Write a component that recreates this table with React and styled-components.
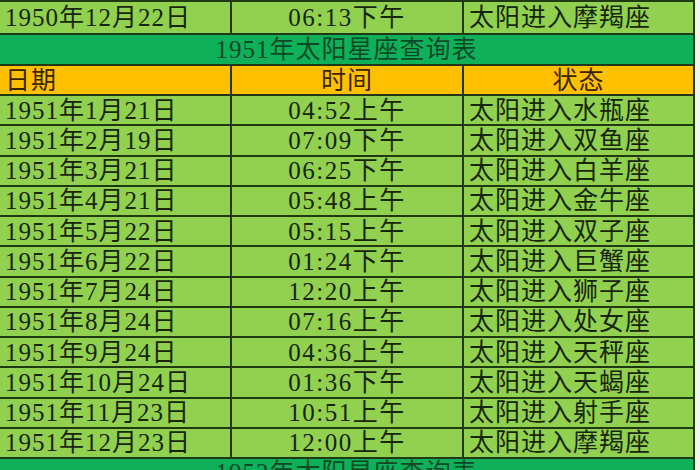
import React from 'react';
import styled, { createGlobalStyle } from 'styled-components';

const GlobalStyle = createGlobalStyle`
  html, body {
    margin: 0;
    padding: 0;
    background: #f3f6ef;
    overflow: hidden;
  }
`;

const Sheet = styled.div`
  width: 695px;
  height: 470px;
  overflow: hidden;
  border-top: 2px solid #1f3a12;
  border-right: 2px solid #1f3a12;
  box-sizing: border-box;
  font-family: "Liberation Serif", "Noto Sans CJK SC", serif;
  font-size: 25px;
  letter-spacing: 1px;
  color: #15260a;
`;

const Row = styled.div`
  display: grid;
  grid-template-columns: 232px 232px 1fr;
  height: ${(p) => p.$h}px;
  box-sizing: border-box;
  border-bottom: 2px solid #1f3a12;
  background: ${(p) => p.$bg || '#92d050'};
`;

const Cell = styled.div`
  display: flex;
  align-items: center;
  justify-content: ${(p) => p.$align || 'flex-start'};
  padding: 0 5px;
  border-right: ${(p) => (p.$last ? 'none' : '2px solid #1f3a12')};
  white-space: nowrap;
  overflow: hidden;
  line-height: 1;
  color: ${(p) => p.$color || 'inherit'};
`;

const TitleRow = styled.div`
  height: ${(p) => p.$h}px;
  box-sizing: border-box;
  border-bottom: 2px solid #1f3a12;
  background: #0fb05a;
  display: flex;
  align-items: ${(p) => (p.$cut ? 'flex-start' : 'center')};
  justify-content: center;
  padding-top: ${(p) => (p.$cut ? '1px' : '0')};
  color: #0c4a26;
  line-height: 1;
  white-space: nowrap;
`;

const Time = styled.span`
  letter-spacing: 1.5px;
`;

const rows = [
  ['1951年1月21日', '04:52上午', '太阳进入水瓶座'],
  ['1951年2月19日', '07:09下午', '太阳进入双鱼座'],
  ['1951年3月21日', '06:25下午', '太阳进入白羊座'],
  ['1951年4月21日', '05:48上午', '太阳进入金牛座'],
  ['1951年5月22日', '05:15上午', '太阳进入双子座'],
  ['1951年6月22日', '01:24下午', '太阳进入巨蟹座'],
  ['1951年7月24日', '12:20上午', '太阳进入狮子座'],
  ['1951年8月24日', '07:16上午', '太阳进入处女座'],
  ['1951年9月24日', '04:36上午', '太阳进入天秤座'],
  ['1951年10月24日', '01:36下午', '太阳进入天蝎座'],
  ['1951年11月23日', '10:51上午', '太阳进入射手座'],
  ['1951年12月23日', '12:00上午', '太阳进入摩羯座'],
];

function DataRow({ date, time, state, h = 30.25 }) {
  return (
    <Row $h={h}>
      <Cell>{date}</Cell>
      <Cell $align="center">
        <Time>{time}</Time>
      </Cell>
      <Cell $last>{state}</Cell>
    </Row>
  );
}

export default function App() {
  return (
    <>
      <GlobalStyle />
      <Sheet>
        <DataRow date="1950年12月22日" time="06:13下午" state="太阳进入摩羯座" h={33} />
        <TitleRow $h={31}>1951年太阳星座查询表</TitleRow>
        <Row $h={30} $bg="#ffc000">
          <Cell $color="#3a2500">日期</Cell>
          <Cell $align="center" $color="#3a2500">时间</Cell>
          <Cell $align="center" $last $color="#3a2500">状态</Cell>
        </Row>
        {rows.map((r) => (
          <DataRow key={r[0]} date={r[0]} time={r[1]} state={r[2]} />
        ))}
        <TitleRow $h={30} $cut>1952年太阳星座查询表</TitleRow>
      </Sheet>
    </>
  );
}
